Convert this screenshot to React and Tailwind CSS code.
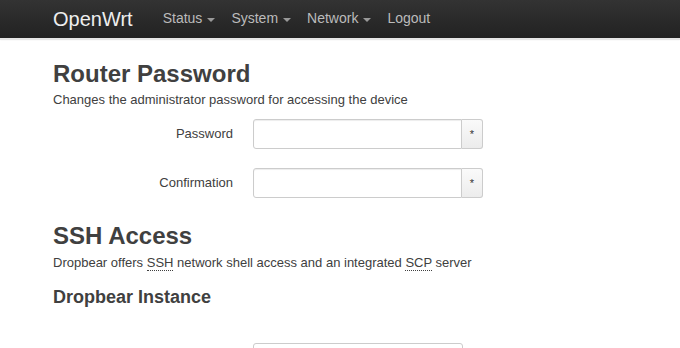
import React from "react";

function Caret() {
  return (
    <span className="ml-[5px] mt-[2px] inline-block h-0 w-0 border-x-[4px] border-t-[4px] border-x-transparent border-t-[#999]" />
  );
}

function Field({ label, className = "" }) {
  return (
    <div className={"flex items-center " + className}>
      <label className="w-[180px] pr-0 text-right text-[13px] text-[#404040]">{label}</label>
      <div className="ml-[20px] flex h-[30px]">
        <input
          type="password"
          className="h-[30px] w-[209px] rounded-l-[3px] border border-[#ccc] bg-white shadow-[inset_0_1px_1px_rgba(0,0,0,0.075)] outline-none"
        />
        <div className="flex h-[30px] w-[21px] items-center justify-center rounded-r-[3px] border border-l-0 border-[#ccc] bg-gradient-to-b from-[#fafafa] to-[#ececec] text-[11px] text-[#333]">
          *
        </div>
      </div>
    </div>
  );
}

export default function App() {
  return (
    <div className="h-[348px] w-[680px] overflow-hidden bg-white font-['Liberation_Sans',Arial,sans-serif]">
      <div className="flex h-[38px] items-center bg-gradient-to-b from-[#333] to-[#222] pb-[1px] shadow-[0_1px_2px_rgba(0,0,0,0.3)]">
        <span className="ml-[53px] text-[20px] text-[#eee]">OpenWrt</span>
        <nav className="ml-[30px] flex items-center gap-[16px] text-[14px] text-[#bbb]">
          <span className="flex items-center">Status<Caret /></span>
          <span className="flex items-center">System<Caret /></span>
          <span className="flex items-center">Network<Caret /></span>
          <span>Logout</span>
        </nav>
      </div>
      <div className="h-[2px] bg-[#e6e6e6]" />
      <div className="px-[53px] text-[#404040]">
        <h2 className="mt-[19px] text-[24px] font-bold leading-[30px]">Router Password</h2>
        <p className="mt-[2px] text-[13px] leading-[18px]">Changes the administrator password for accessing the device</p>
        <Field label="Password" className="mt-[10px]" />
        <Field label="Confirmation" className="mt-[19px]" />
        <h2 className="mt-[23px] text-[24px] font-bold leading-[30px]">SSH Access</h2>
        <p className="mt-[3px] text-[13px] leading-[18px]">
          Dropbear offers{" "}
          <abbr className="border-b border-dotted border-[#404040] no-underline">SSH</abbr> network shell access and an integrated{" "}
          <abbr className="border-b border-dotted border-[#404040] no-underline">SCP</abbr> server
        </p>
        <h3 className="mt-[14px] text-[18px] font-bold leading-[22px]">Dropbear Instance</h3>
        <div className="ml-[200px] mt-[35px] h-[30px] w-[210px] rounded-[3px] border border-[#ccc]" />
      </div>
    </div>
  );
}
